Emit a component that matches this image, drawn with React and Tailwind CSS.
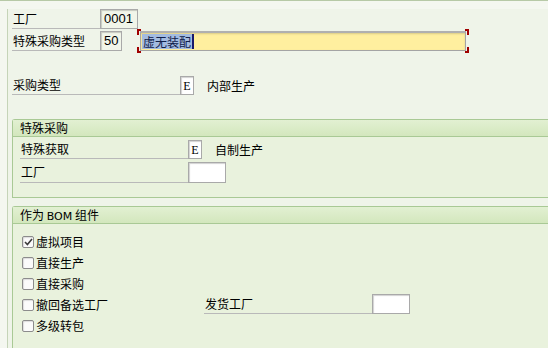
import React from "react";

const CJK = "font-['Noto_Sans_CJK_SC','Noto_Sans',sans-serif]";

function Box({ w, h = "h-[20px]", children, bg = "bg-white", className = "" }) {
  return (
    <div
      className={`${w} ${h} ${bg} border border-[#a9a9a9] shadow-[inset_1px_1px_1px_rgba(0,0,0,0.18)] flex items-center ${className}`}
    >
      {children}
    </div>
  );
}

function Label({ w, children, className = "" }) {
  return (
    <div className={`${w} h-full border-b border-[#b9b9b9] flex items-center pl-[1px] ${className}`}>
      <span className="leading-none">{children}</span>
    </div>
  );
}

function Check({ checked }) {
  return (
    <div className="w-[12px] h-[12px] rounded-[2px] border border-[#8c8c8c] bg-[#fbfbfb] flex items-center justify-center shadow-[inset_1px_1px_1px_rgba(0,0,0,0.12)]">
      {checked && (
        <svg width="9" height="8" viewBox="0 0 9 8">
          <path d="M1 4 L3.4 6.5 L8 1" fill="none" stroke="#3c3c3c" strokeWidth="1.6" />
        </svg>
      )}
    </div>
  );
}

function Group({ title, children, className = "" }) {
  return (
    <div className={`border border-r-0 border-[#a9c995] rounded-tl-[3px] bg-[#e9f2dd] ${className}`}>
      <div className="h-[17px] border-b border-[#a9c995] bg-linear-to-b from-[#e2f0d2] to-[#d3e7bd] pl-[7px] flex items-center">
        <span className="leading-none">{title}</span>
      </div>
      {children}
    </div>
  );
}

function CheckRow({ checked, text, children }) {
  return (
    <div className="h-[21px] flex items-center">
      <div className="w-[191px] flex items-center pl-[9px]">
        <Check checked={checked} />
        <span className="ml-[2px] leading-none">{text}</span>
      </div>
      {children}
    </div>
  );
}

export default function App() {
  return (
    <div className={`w-[548px] h-[348px] overflow-hidden bg-[#f4f7f0] border-t border-[#b7c9a7] text-[12px] text-black ${CJK}`}>
      <div className="ml-[7px] h-full border-l border-[#c5d4b8] bg-[#eff4e9] pl-[4px]">
        {/* Row 1 */}
        <div className="mt-[8px] h-[20px] flex">
          <Label w="w-[88px]">工厂</Label>
          <Box w="w-[38px]" bg="bg-[#f1f5e9]" className="font-['Liberation_Sans',sans-serif] text-[13px] pl-[3px]">
            0001
          </Box>
        </div>
        {/* Row 2 */}
        <div className="mt-[2px] h-[20px] flex">
          <Label w="w-[88px]">特殊采购类型</Label>
          <Box w="w-[22px]" bg="bg-[#f1f5e9]" className="font-['Liberation_Sans',sans-serif] text-[13px] pl-[3px]">
            50
          </Box>
          <div className="relative ml-[15px] w-[332px] h-[20px] pl-[3px]">
            <div className="absolute left-0 top-[-2px] w-[4px] h-[6px] border-l-2 border-t-2 border-[#a00000]" />
            <div className="absolute left-0 bottom-[-2px] w-[4px] h-[6px] border-l-2 border-b-2 border-[#a00000]" />
            <div className="absolute right-0 top-[-2px] w-[4px] h-[6px] border-r-2 border-t-2 border-[#a00000]" />
            <div className="absolute right-0 bottom-[-2px] w-[4px] h-[6px] border-r-2 border-b-2 border-[#a00000]" />
            <div className="w-[326px] h-[20px] bg-[#ffef9f] border border-[#a4a4a4] border-t-2 border-t-[#b0b0b0] shadow-[inset_0_1px_2px_rgba(0,0,0,0.15)] flex items-center pl-[1px]">
              <span className="bg-[#a3bbe0] text-[#10204a] leading-[15px] px-[1px]">虚无装配</span>
              <span className="w-[2px] h-[15px] bg-[#1a1a6a]" />
            </div>
          </div>
        </div>
        {/* Row 3 */}
        <div className="mt-[25px] h-[19px] flex items-center">
          <Label w="w-[168px]">采购类型</Label>
          <Box w="w-[14px]" h="h-[19px]" className="justify-center font-['Liberation_Serif',serif] text-[12px]">
            E
          </Box>
          <span className="ml-[13px] leading-none">内部生产</span>
        </div>

        {/* Group 1 */}
        <Group title="特殊采购" className="mt-[24px] pb-[14px]">
          <div className="mt-[3px] h-[19px] flex items-center pl-[7px]">
            <Label w="w-[168px]">特殊获取</Label>
            <Box w="w-[14px]" h="h-[19px]" className="justify-center font-['Liberation_Serif',serif] text-[12px]">
              E
            </Box>
            <span className="ml-[13px] leading-none">自制生产</span>
          </div>
          <div className="mt-[3px] h-[21px] flex items-center pl-[7px]">
            <Label w="w-[168px]">工厂</Label>
            <Box w="w-[38px]" h="h-[21px]" />
          </div>
        </Group>

        {/* Group 2 */}
        <Group title={<span>作为 <span className="font-['DejaVu_Sans',sans-serif] text-[11px]">BOM</span> 组件</span>} className="mt-[8px] pb-[60px]">
          <div className="mt-[7px]">
            <CheckRow checked text="虚拟项目" />
            <CheckRow text="直接生产" />
            <CheckRow text="直接采购" />
            <CheckRow text="撤回备选工厂">
              <div className="h-[20px] flex self-start">
                <Label w="w-[168px]">发货工厂</Label>
                <Box w="w-[38px]" h="h-[20px]" />
              </div>
            </CheckRow>
            <CheckRow text="多级转包" />
          </div>
        </Group>
      </div>
    </div>
  );
}
